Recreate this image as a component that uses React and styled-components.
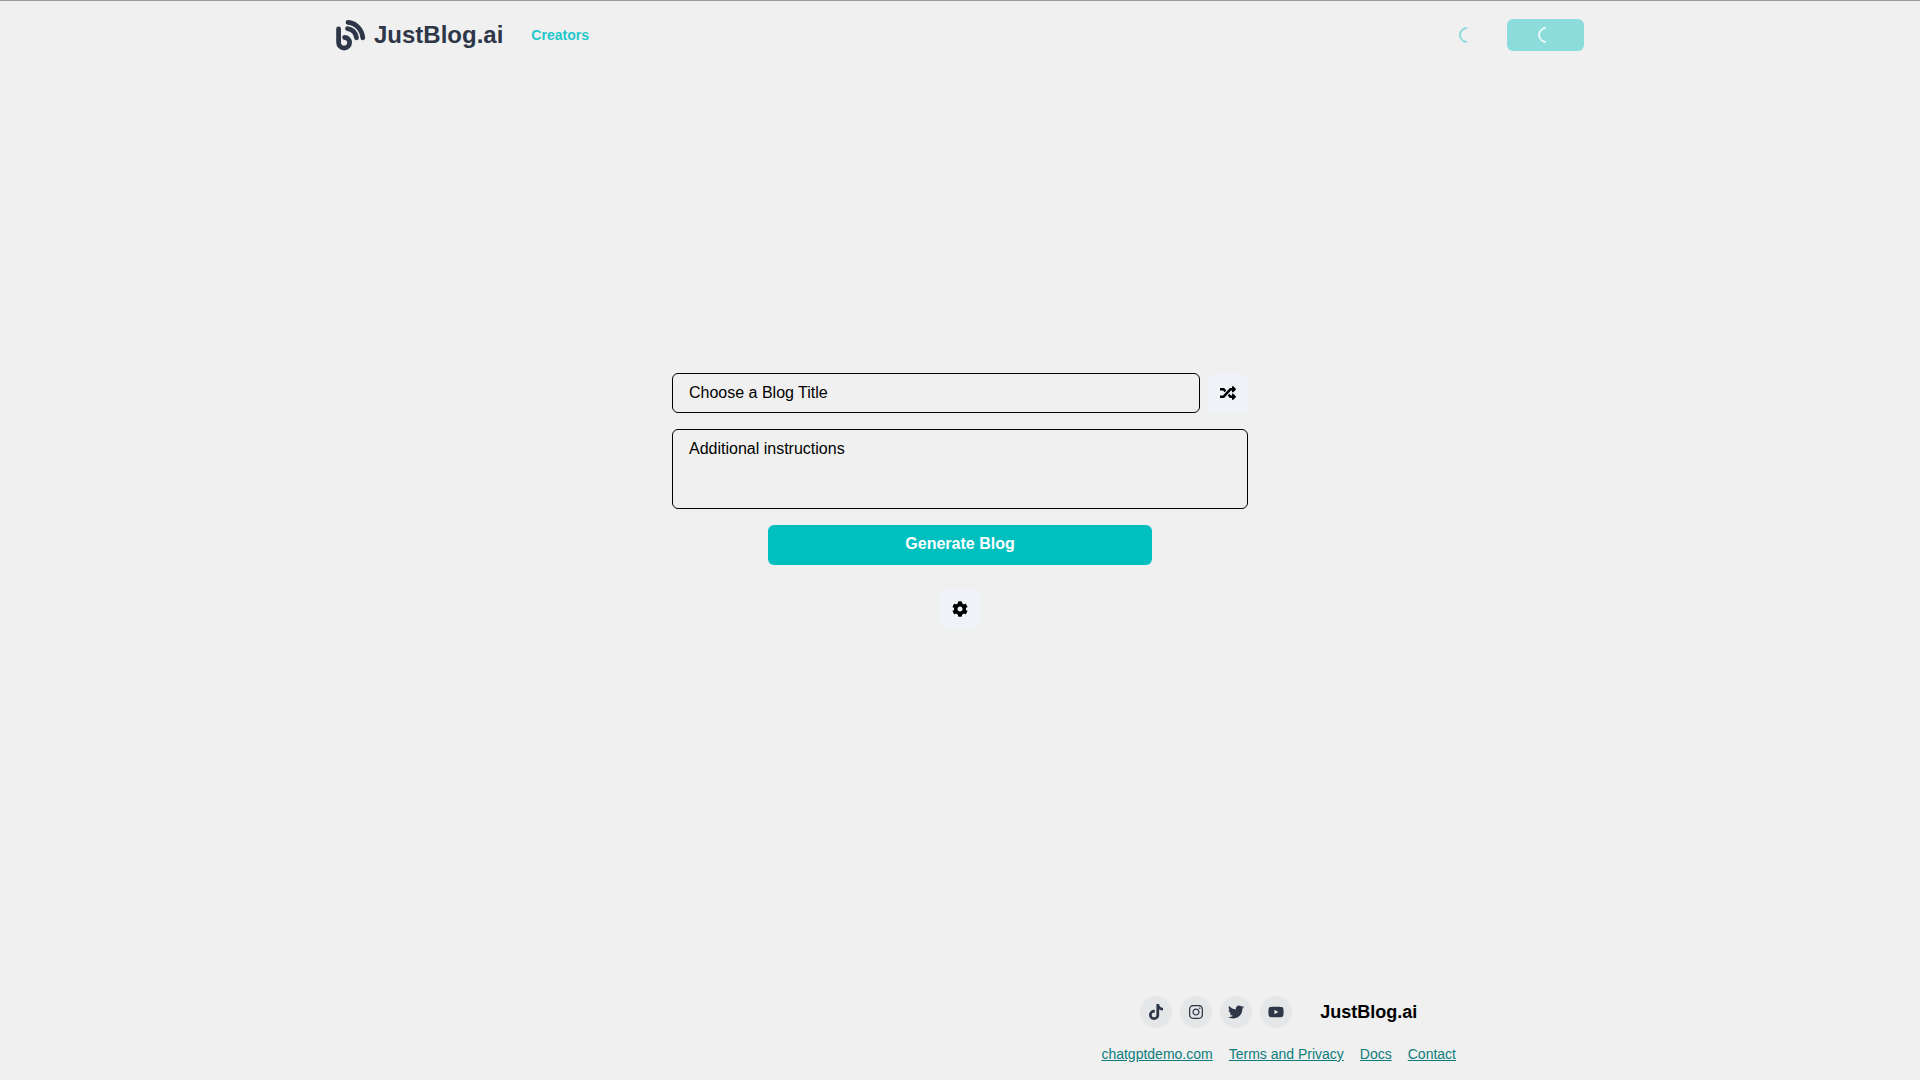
import React from 'react'
import styled, { createGlobalStyle } from 'styled-components'
import { FaRandom, FaCog, FaTiktok, FaInstagram, FaTwitter, FaYoutube } from 'react-icons/fa'

const GlobalStyle = createGlobalStyle`
    html, body {
        margin: 0;
        padding: 0;
        background: #f0f0f0;
        font-family: "Liberation Sans", Arial, sans-serif;
    }
    * {
        box-sizing: border-box;
    }
`

const Page = styled.div`
    min-height: 100vh;
    display: flex;
    flex-direction: column;
    border-top: 1px solid #9a9a9a;
`

const Header = styled.header`
    width: 1280px;
    height: 68px;
    margin: 0 auto;
    padding: 18px 16px 0;
    display: flex;
    align-items: flex-start;
    justify-content: space-between;
`

const Brand = styled.div`
    display: flex;
    align-items: center;
    height: 32px;
`

const LogoName = styled.span`
    margin-left: 8px;
    font-size: 24px;
    font-weight: 700;
    color: #2d3748;
`

const NavLink = styled.a`
    margin-left: 28px;
    font-size: 14px;
    font-weight: 700;
    color: #22c7ca;
`

const Account = styled.div`
    display: flex;
    align-items: center;
    gap: 32px;
`

// half circle opening to the right, like the spinner frame in the screenshot
const Spinner = styled.div`
    width: 16px;
    height: 16px;
    border-radius: 50%;
    border: 2px solid ${(props) => props.color};
    border-top-color: transparent;
    border-right-color: transparent;
    transform: rotate(45deg);
`

const LoadingSlot = styled.div`
    width: 16px;
    height: 32px;
    display: flex;
    align-items: center;
    justify-content: center;
`

const LoadingButton = styled.div`
    width: 77px;
    height: 32px;
    border-radius: 6px;
    background: #8ddcdc;
    display: flex;
    align-items: center;
    justify-content: center;
`

const Main = styled.main`
    flex: 1;
    padding-top: 304px;
    display: flex;
    flex-direction: column;
    align-items: center;
`

const TitleRow = styled.div`
    width: 576px;
    display: flex;
    gap: 8px;
`

const TitleInput = styled.input`
    flex: 1;
    height: 40px;
    padding: 0 16px;
    border: 1px solid #000;
    border-radius: 6px;
    background: transparent;
    font-family: inherit;
    font-size: 16px;
    color: #000;
    outline: none;
    &::placeholder {
        color: #000;
        opacity: 1;
    }
`

const IconButton = styled.button`
    width: 40px;
    height: 40px;
    flex: none;
    padding: 0;
    border: none;
    border-radius: 6px;
    background: #eff3f8;
    color: #000;
    display: flex;
    align-items: center;
    justify-content: center;
    font-size: 16px;
`

const Instructions = styled.textarea`
    display: block;
    width: 576px;
    height: 80px;
    margin-top: 16px;
    padding: 9px 16px;
    border: 1px solid #000;
    border-radius: 6px;
    background: transparent;
    font-family: inherit;
    font-size: 16px;
    line-height: 20px;
    color: #000;
    outline: none;
    resize: none;
    &::placeholder {
        color: #000;
        opacity: 1;
    }
`

const GenerateButton = styled.button`
    width: 384px;
    height: 40px;
    margin-top: 16px;
    padding: 0 0 2px;
    border: none;
    border-radius: 6px;
    background: #00bfbf;
    color: #fff;
    font-family: inherit;
    font-size: 16px;
    font-weight: 700;
`

const SettingsWrap = styled.div`
    margin-top: 24px;
`

const Footer = styled.footer`
    width: 1280px;
    margin: 0 auto;
    padding: 0 144px 18px 0;
    display: flex;
    justify-content: flex-end;
`

const FooterInner = styled.div`
    display: flex;
    flex-direction: column;
    align-items: center;
    gap: 18px;
`

const SocialRow = styled.div`
    display: flex;
    align-items: center;
    gap: 8px;
`

const SocialIcon = styled.a`
    width: 32px;
    height: 32px;
    border-radius: 50%;
    background: #e4e6e7;
    color: #2d3748;
    display: flex;
    align-items: center;
    justify-content: center;
    font-size: 16px;
`

const FooterName = styled.span`
    margin-left: 20px;
    font-size: 18px;
    font-weight: 700;
    color: #000;
`

const LinkRow = styled.div`
    display: flex;
    gap: 16px;
    font-size: 14px;
`

const FooterLink = styled.a`
    color: #0e7c7c;
    text-decoration: underline;
`

const Logo = () => (
    <svg width="30" height="30" viewBox="0 0 30 30" fill="none" stroke="#2d3748" strokeWidth="4.8" strokeLinecap="round" style={{ overflow: 'visible' }}>
        <path d="M2.6 9V22.5a5.5 5.5 0 0 0 11 0c0-3-2.2-5-5-5" />
        <path d="M11.5 8.6c4.8.6 8.4 4.2 9 9.2" />
        <path d="M12 2.4c7.7.6 14 6.8 14.8 15.4" />
    </svg>
)

const App = () => (
    <Page>
        <GlobalStyle />
        <Header>
            <Brand>
                <Logo />
                <LogoName>JustBlog.ai</LogoName>
                <NavLink>Creators</NavLink>
            </Brand>
            <Account>
                <LoadingSlot>
                    <Spinner color="#8ddcdc" />
                </LoadingSlot>
                <LoadingButton>
                    <Spinner color="#e6f7f7" />
                </LoadingButton>
            </Account>
        </Header>
        <Main>
            <TitleRow>
                <TitleInput placeholder="Choose a Blog Title" />
                <IconButton><FaRandom /></IconButton>
            </TitleRow>
            <Instructions placeholder="Additional instructions" />
            <GenerateButton>Generate Blog</GenerateButton>
            <SettingsWrap>
                <IconButton><FaCog /></IconButton>
            </SettingsWrap>
        </Main>
        <Footer>
            <FooterInner>
                <SocialRow>
                    <SocialIcon><FaTiktok /></SocialIcon>
                    <SocialIcon><FaInstagram /></SocialIcon>
                    <SocialIcon><FaTwitter /></SocialIcon>
                    <SocialIcon><FaYoutube /></SocialIcon>
                    <FooterName>JustBlog.ai</FooterName>
                </SocialRow>
                <LinkRow>
                    <FooterLink>chatgptdemo.com</FooterLink>
                    <FooterLink>Terms and Privacy</FooterLink>
                    <FooterLink>Docs</FooterLink>
                    <FooterLink>Contact</FooterLink>
                </LinkRow>
            </FooterInner>
        </Footer>
    </Page>
)

export default App
